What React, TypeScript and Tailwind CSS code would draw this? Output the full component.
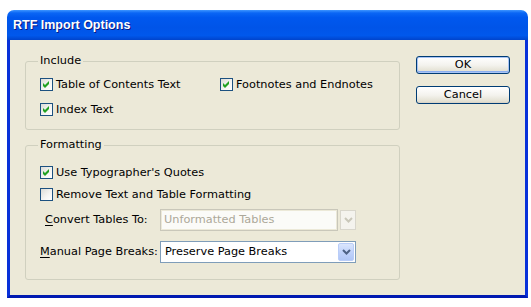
import React from "react";

const ui = { fontFamily: '"DejaVu Sans", Verdana, sans-serif' };

function CheckBox({ checked }: { checked: boolean }) {
  return (
    <span className="w-[13px] h-[13px] shrink-0 border border-[#1c5180] bg-[linear-gradient(135deg,#dcdcd7_0%,#f6f6f3_60%,#ffffff_100%)] flex">
      {checked && (
        <svg width="11" height="11" viewBox="0 0 11 11">
          <path d="M2 4 L4 6 L8 2 L8 5 L4 9 L2 7 Z" fill="#21a121" />
        </svg>
      )}
    </span>
  );
}

function Option({ label, checked }: { label: string; checked: boolean }) {
  return (
    <div className="flex items-center gap-[3px] h-[13px] text-[11.3px] text-black leading-none">
      <CheckBox checked={checked} />
      <span>{label}</span>
    </div>
  );
}

function Chevron({ color }: { color: string }) {
  return (
    <svg width="9" height="6" viewBox="0 0 9 6">
      <path d="M1 1 L4.5 4.5 L8 1" fill="none" stroke={color} strokeWidth="2" />
    </svg>
  );
}

function GroupBox({ title, children, className }: { title: string; children: React.ReactNode; className: string }) {
  return (
    <div className={`relative w-[375px] border border-[#d0d0bf] rounded-[3px] ${className}`}>
      <span className="absolute -top-[8px] left-[12px] px-[2px] bg-[#ece9d8] text-[11.3px] leading-[14px] text-black">
        {title}
      </span>
      {children}
    </div>
  );
}

function XPButton({ label, isDefault }: { label: string; isDefault?: boolean }) {
  return (
    <button
      className={`w-[94px] h-[18px] rounded-[3px] border border-[#003c74] text-[11.3px] leading-none text-black flex items-center justify-center bg-[linear-gradient(to_bottom,#ffffff_0%,#f4f3ee_50%,#e3e0d2_90%,#d6d0c5_100%)] ${
        isDefault ? "shadow-[inset_0_0_0_1px_#a9c4f5,inset_0_-1px_0_1px_#8aaef0]" : ""
      }`}
    >
      {label}
    </button>
  );
}

export default function App() {
  return (
    <div className="w-[531px] h-[307px] bg-white pt-[10px] pl-[7px]" style={ui}>
      <div className="w-[521px] flex flex-col">
        {/* Title bar */}
        <div className="h-[30px] rounded-t-[7px] flex items-center pl-[6px] bg-[linear-gradient(to_bottom,#3d95ff_0%,#0a66f5_10%,#0058ee_25%,#0054e8_60%,#0058ec_85%,#0044cc_100%)]">
          <span
            className="text-white font-bold text-[12.5px] [text-shadow:1px_1px_0_#0a1883]"
            style={{ fontFamily: '"Liberation Sans", Arial, sans-serif' }}
          >
            RTF Import Options
          </span>
        </div>

        {/* Body */}
        <div className="h-[258px] bg-[#ece9d8] border-x-[3px] border-b-[3px] border-x-[#0831d9] border-b-[#0019b0] flex items-start pl-[15px]">
          <div className="flex flex-col pt-[21px]">
            <GroupBox title="Include" className="pt-[16px] pb-[13px] pl-[14px]">
              <div className="grid grid-cols-[180px_1fr] gap-y-[12px]">
                <Option label="Table of Contents Text" checked />
                <Option label="Footnotes and Endnotes" checked />
                <Option label="Index Text" checked />
              </div>
            </GroupBox>

            <GroupBox title="Formatting" className="mt-[15px] pt-[20px] pb-[16px] pl-[14px]">
              <div className="flex flex-col">
                <Option label="Use Typographer's Quotes" checked />
                <div className="mt-[9px]">
                  <Option label="Remove Text and Table Formatting" checked={false} />
                </div>

                <div className="mt-[8px] flex items-center h-[22px] text-[11.3px]">
                  <span className="w-[120px] pl-[5px] text-black">
                    <u className="underline-offset-2">C</u>onvert Tables To:
                  </span>
                  <div className="w-[196px] h-[22px] flex items-center gap-[2px]">
                    <div className="flex-1 h-full border border-[#c9c7ba] bg-[#ece9d8] p-[1px]">
                      <div className="h-full bg-[#fbfbf8] flex items-center pl-[2px] text-[#aca899]">
                        Unformatted Tables
                      </div>
                    </div>
                    <div className="w-[16px] h-[20px] border border-[#d8d6cc] bg-[#f4f3ee] flex items-center justify-center">
                      <Chevron color="#c9c7ba" />
                    </div>
                  </div>
                </div>

                <div className="mt-[10px] flex items-center h-[22px] text-[11.3px]">
                  <span className="w-[120px] text-black">
                    <u className="underline-offset-2">M</u>anual Page Breaks:
                  </span>
                  <div className="w-[196px] h-[22px] border border-[#7f9db9] bg-white flex items-center p-[1px]">
                    <span className="flex-1 pl-[3px] text-black">Preserve Page Breaks</span>
                    <div className="w-[16px] h-[18px] rounded-[2px] border border-[#b9cdf8] bg-[linear-gradient(to_bottom,#dbe6fd_0%,#c1d3fb_50%,#b0c6f6_100%)] flex items-center justify-center">
                      <Chevron color="#4d6185" />
                    </div>
                  </div>
                </div>
              </div>
            </GroupBox>
          </div>

          <div className="ml-[16px] pt-[16px] flex flex-col gap-[12px]">
            <XPButton label="OK" isDefault />
            <XPButton label="Cancel" />
          </div>
        </div>
      </div>
    </div>
  );
}
